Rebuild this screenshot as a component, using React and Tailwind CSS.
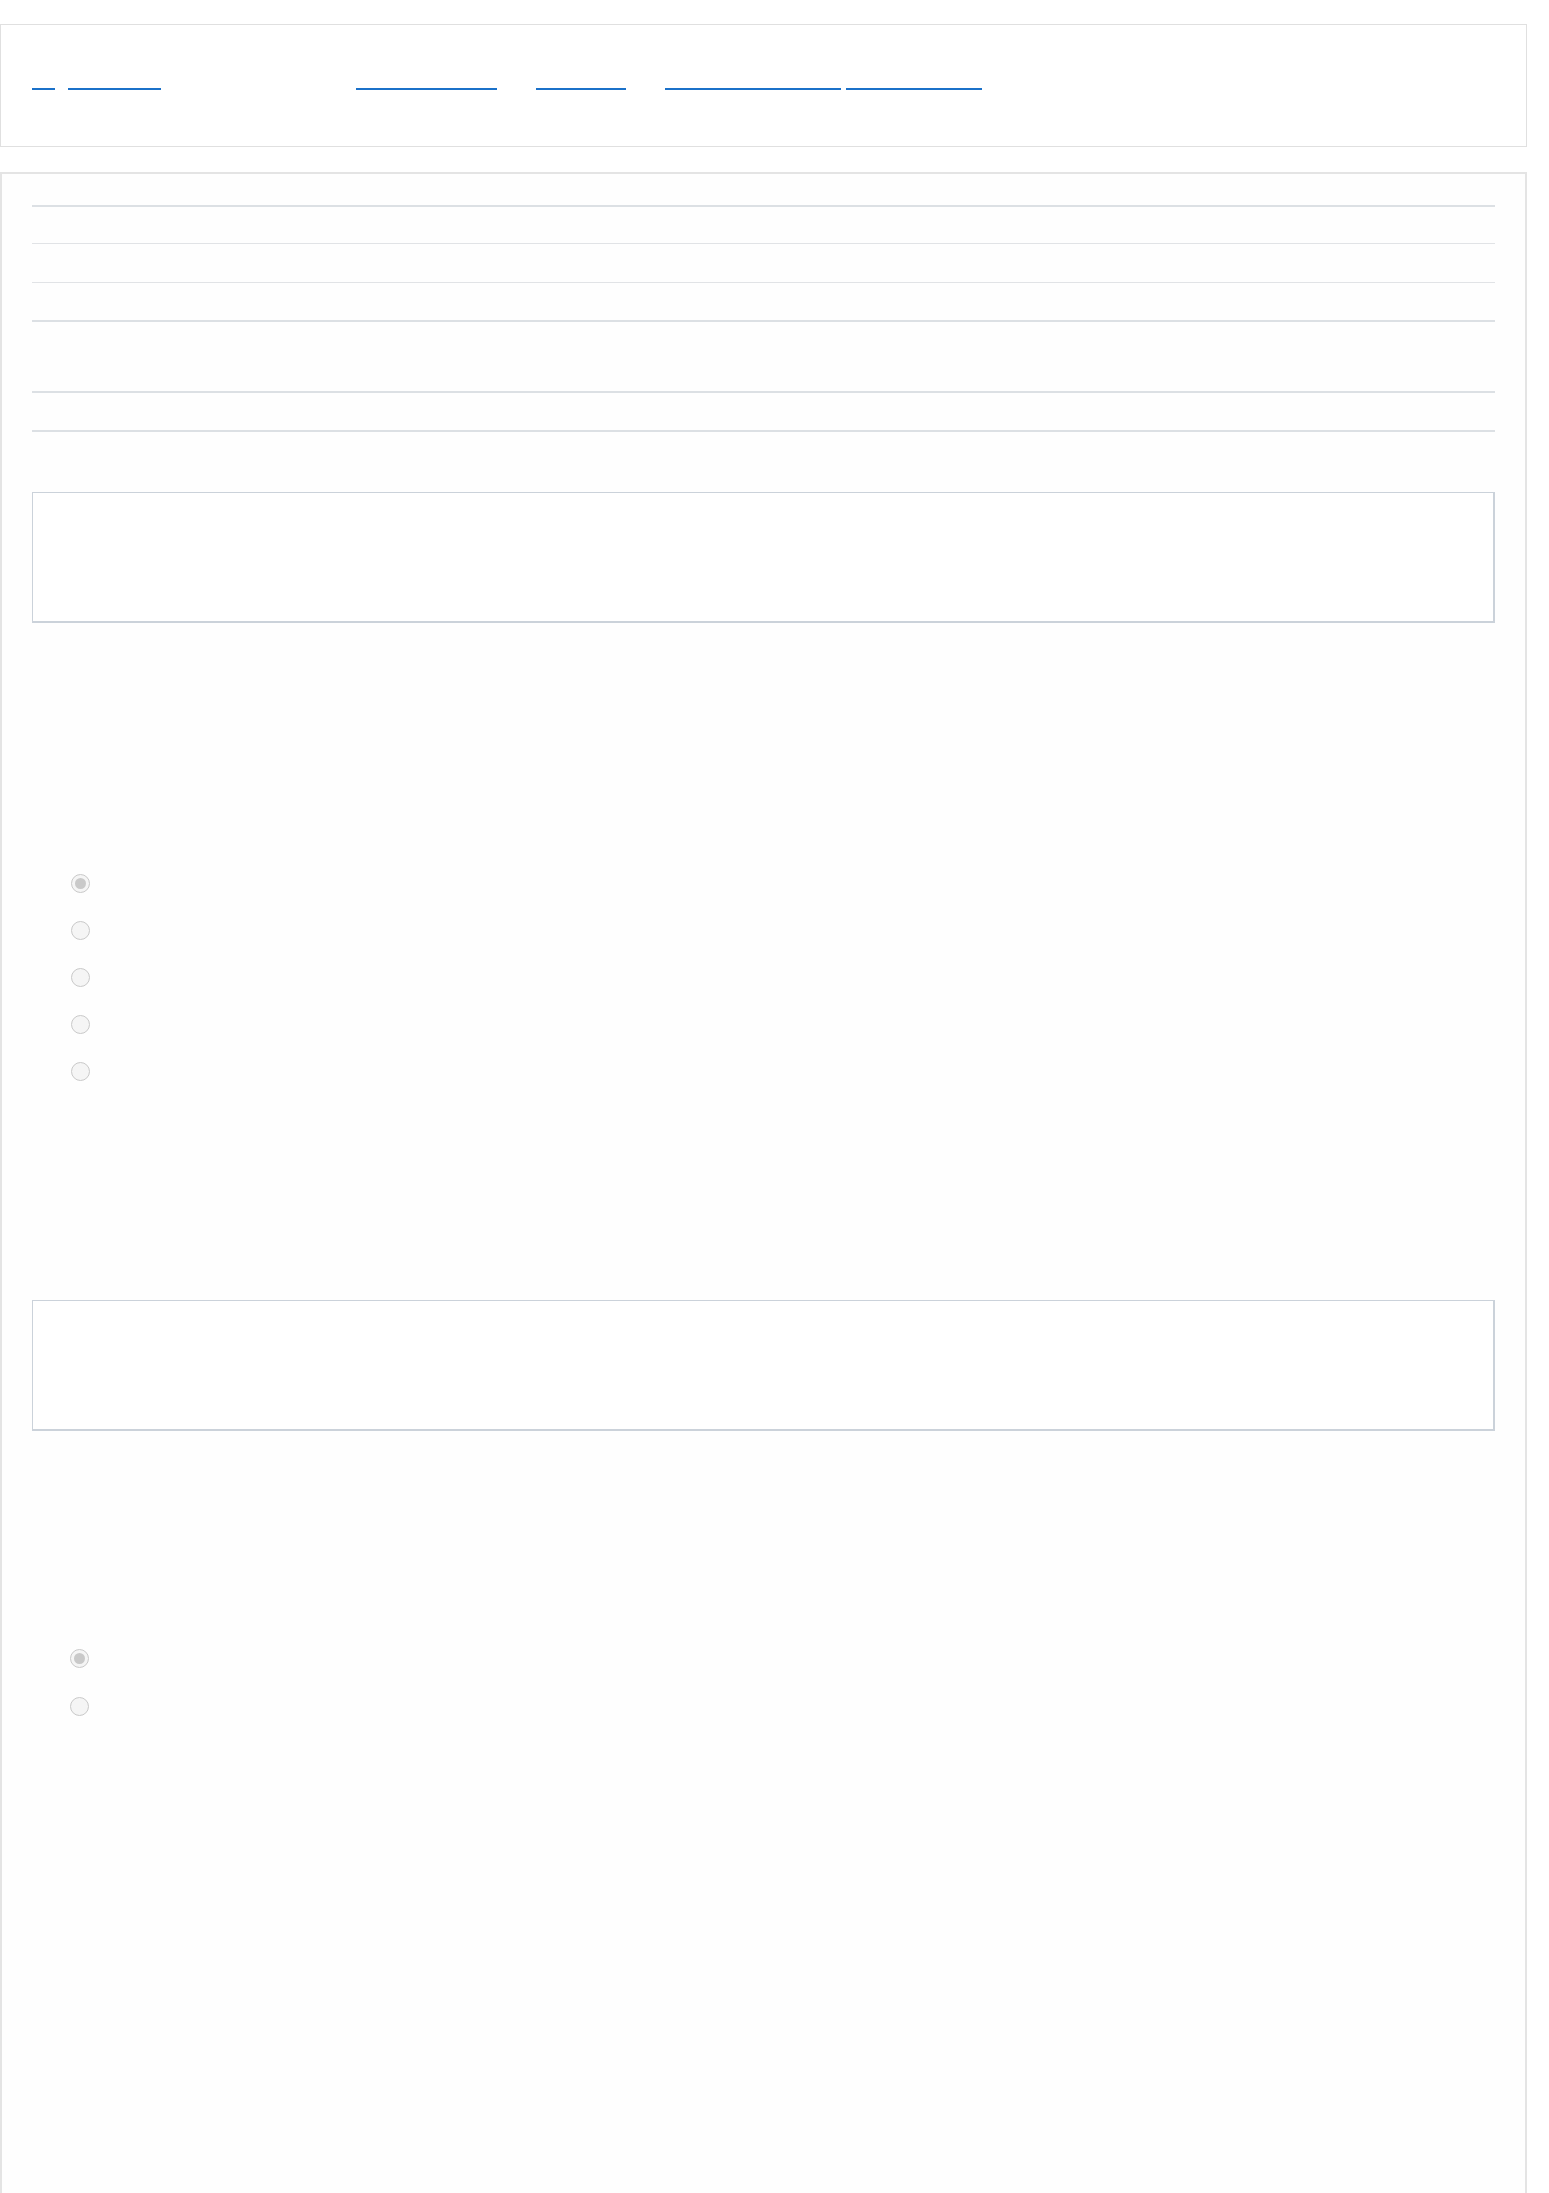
import React from 'react';

// widths and gaps of the header link underlines
const links = [
  { gap: 31, w: 23 },
  { gap: 13, w: 93 },
  { gap: 195, w: 141 },
  { gap: 39, w: 90 },
  { gap: 39, w: 176 },
  { gap: 5, w: 136 },
];

const Radio = ({ checked }) => (
  <div className="w-[19px] h-[19px] rounded-full border-[1.5px] border-[#c9c9c9] bg-[#f5f5f5] flex items-center justify-center">
    {checked && <div className="w-[11px] h-[11px] rounded-full bg-[#c9c9c9]" />}
  </div>
);

const Field = ({ className = '' }) => (
  <div
    className={`h-[131px] border-t border-l border-r-2 border-b-2 border-[#cbd2da] bg-white ${className}`}
  />
);

const Rule = ({ thick, className = '' }) => (
  <div className={`${thick ? 'h-[2px] bg-[#dce0e4]' : 'h-px bg-[#e1e3e6]'} ${className}`} />
);

export default function App() {
  return (
    <div className="w-[1549px] bg-white font-['Liberation_Sans',sans-serif]">
      <header className="mt-[24px] w-[1527px] h-[123px] border border-[#e0e0e0] bg-white flex items-start">
        {links.map((l, i) => (
          <a
            key={i}
            href="#"
            className="block mt-[63px] h-[2px] bg-[#1b71c9]"
            style={{ marginLeft: l.gap, width: l.w }}
          />
        ))}
      </header>

      <main className="mt-[25px] w-[1527px] h-[2100px] border-2 border-b-0 border-[#e4e4e4] bg-[#fefefe] px-[30px] pt-[31px]">
        <Rule thick />
        <Rule className="mt-[36px]" />
        <Rule className="mt-[38px]" />
        <Rule thick className="mt-[37px]" />
        <Rule thick className="mt-[69px]" />
        <Rule thick className="mt-[37px]" />

        <Field className="mt-[60px]" />

        <div className="mt-[251px] ml-[39px] flex flex-col gap-[28px]">
          <Radio checked />
          <Radio />
          <Radio />
          <Radio />
          <Radio />
        </div>

        <Field className="mt-[219px]" />

        <div className="mt-[218px] ml-[38px] flex flex-col gap-[29px]">
          <Radio checked />
          <Radio />
        </div>
      </main>
    </div>
  );
}
